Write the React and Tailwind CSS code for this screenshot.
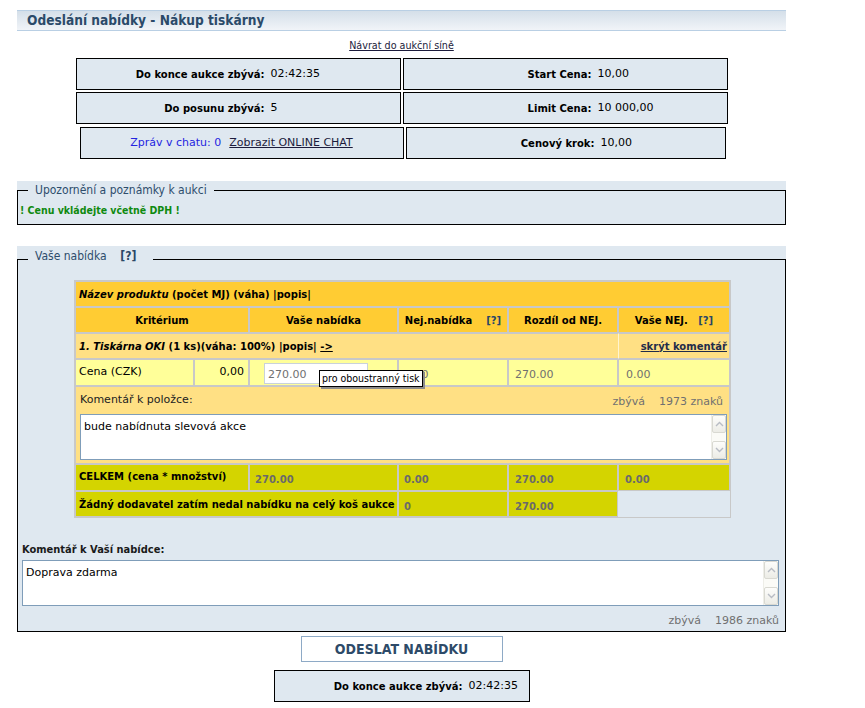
import React from "react";

/* Odeslání nabídky — formulář aukce (nákup tiskárny) */

const V = "font-['DejaVu_Sans',Verdana,sans-serif]";
const T = "font-['DejaVu_Sans_Condensed','DejaVu_Sans',Tahoma,sans-serif]";

const cell = "border border-[#c8c8c8] align-middle";

function InfoBox({ label, value, w = "w-[325px]", labelW = "w-[188px]" }) {
  return (
    <div className={`${w} h-[32px] border border-black bg-[#dfe8f0] flex items-center`}>
      <div className={`${labelW} shrink-0 text-right font-bold text-[10px] text-black`}>{label}</div>
      <div className="pl-[6px] text-[11px] text-black">{value}</div>
    </div>
  );
}

function FakeScroll() {
  return (
    <div className="flex w-[15px] flex-col justify-between bg-[#fbfbf7] border-l border-[#eeeee8]">
      <div className="flex h-[18px] items-center justify-center rounded-[2px] border border-[#d9d9d2] bg-gradient-to-b from-[#fdfdfb] to-[#ecece6]">
        <svg width="9" height="6" viewBox="0 0 9 6">
          <path d="M1 5 L4.5 1.5 L8 5" fill="none" stroke="#b8bcc4" strokeWidth="1.4" />
        </svg>
      </div>
      <div className="flex h-[18px] items-center justify-center rounded-[2px] border border-[#d9d9d2] bg-gradient-to-b from-[#fdfdfb] to-[#ecece6]">
        <svg width="9" height="6" viewBox="0 0 9 6">
          <path d="M1 1 L4.5 4.5 L8 1" fill="none" stroke="#b8bcc4" strokeWidth="1.4" />
        </svg>
      </div>
    </div>
  );
}

function FakeTextarea({ text, className }) {
  return (
    <div className={`flex border border-[#7f9db9] bg-white ${className}`}>
      <div className="flex-1 px-[3px] pt-[5px] text-[11px] leading-[14px] text-black">{text}</div>
      <FakeScroll />
    </div>
  );
}

export default function App() {
  return (
    <div className={`${V} min-h-[708px] w-[865px] bg-white text-black`}>
      <div className="ml-[17px] w-[769px] pt-[10px]">
        {/* Titulek */}
        <div className="flex h-[21px] items-center border-y border-[#b9cfe4] bg-gradient-to-b from-[#d4dfe9] to-[#f1f4f8] pl-[10px]">
          <h1 className={`${T} text-[13.6px] font-bold text-[#2b4a69]`}>Odeslání nabídky - Nákup tiskárny</h1>
        </div>

        <div className="mt-[9px] text-center text-[9.6px] leading-[12px]">
          <a className="text-[#1c1c3c] underline">Návrat do aukční síně</a>
        </div>

        {/* Info boxy */}
        <div className="mt-[6px] flex flex-col items-center">
          <div className="flex gap-[2px]">
            <InfoBox label="Do konce aukce zbývá:" value="02:42:35" />
            <InfoBox label="Start Cena:" value="10,00" />
          </div>
          <div className="mt-[2px] flex gap-[2px]">
            <InfoBox label="Do posunu zbývá:" value="5" />
            <InfoBox label="Limit Cena:" value="10 000,00" />
          </div>
          <div className="mt-[3px] flex gap-[2px] pl-[2px]">
            <div className="flex h-[32px] w-[324px] items-center justify-center border border-black bg-[#dfe8f0] text-[11px]">
              <span className="text-[#2424e0]">Zpráv v chatu: 0</span>
              <a className="ml-[8px] text-[#1c1c3c] underline">Zobrazit ONLINE CHAT</a>
            </div>
            <InfoBox w="w-[320px]" labelW="w-[188px]" label="Cenový krok:" value="10,00" />
          </div>
        </div>

        {/* Upozornění */}
        <div className="mt-[22px] bg-[#dfe8f0]">
          <fieldset className="border border-black px-[2px]">
            <legend className={`${T} ml-[8px] px-[7px] text-[12px] leading-[18px] text-[#2e4d6c]`}>
              Upozornění a poznámky k aukci
            </legend>
            <div className={`${T} pt-[4px] pb-[6px] text-[10.5px] font-bold leading-[15px] text-[#0f8a0f]`}>
              ! Cenu vkládejte včetně DPH !
            </div>
          </fieldset>
        </div>

        {/* Vaše nabídka */}
        <div className="mt-[21px] bg-[#dfe8f0] pt-[1px]">
          <fieldset className="border border-black pl-[4px] pr-[6px] pb-[3px]">
            <legend className={`${T} ml-[6px] h-[24px] pl-[7px] pr-[17px] text-[12px] leading-[18px] text-[#2e4d6c]`}>
              Vaše nabídka&nbsp;&nbsp;&nbsp;&nbsp;<span className="font-bold text-[#2a4766]">[?]</span>
            </legend>

            <div className="relative ml-[52px] mt-[9px] w-[657px]">
              <table className="w-[657px] table-fixed border-separate border-spacing-0 border border-[#c8c8c8] text-[11px]">
                <colgroup>
                  <col className="w-[119px]" />
                  <col className="w-[55px]" />
                  <col className="w-[149px]" />
                  <col className="w-[110px]" />
                  <col className="w-[110px]" />
                  <col className="w-[112px]" />
                </colgroup>
                <tbody>
                  <tr className="h-[26px] bg-[#ffcc33]">
                    <td colSpan={6} className={`${cell} pl-[3px] text-[10px] font-bold`}>
                      <i>Název produktu</i> (počet MJ) (váha) |popis|
                    </td>
                  </tr>
                  <tr className="h-[26px] bg-[#ffcc33] text-[10px] font-bold">
                    <td colSpan={2} className={`${cell} text-center`}>Kritérium</td>
                    <td className={`${cell} text-center`}>Vaše nabídka</td>
                    <td className={`${cell} text-center`}>
                      Nej.nabídka&nbsp;&nbsp;&nbsp;&nbsp;<span className="text-[#2a4766]">[?]</span>
                    </td>
                    <td className={`${cell} text-center`}>Rozdíl od NEJ.</td>
                    <td className={`${cell} text-center`}>
                      Vaše NEJ.&nbsp;&nbsp;&nbsp;<span className="text-[#2a4766]">[?]</span>
                    </td>
                  </tr>
                  <tr className="h-[26px] bg-[#ffe084] text-[10px] font-bold">
                    <td colSpan={5} className={`${cell} border-r-0 pl-[3px]`}>
                      <i>1. Tiskárna OKI</i> (1 ks)(váha: 100%) |popis| <a className="underline">-&gt;</a>
                    </td>
                    <td className="border-y border-r border-[#c8c8c8] border-l border-l-[#fff4d0] pr-[2px] text-right align-middle">
                      <a className="text-[#1f2c4a] underline">skrýt komentář</a>
                    </td>
                  </tr>
                  <tr className="h-[27px] bg-[#ffff99]">
                    <td className={`${cell} pl-[3px]`}>Cena (CZK)</td>
                    <td className={`${cell} pr-[4px] text-right`}>0,00</td>
                    <td className={`${cell} pl-[14px] pt-[2px]`}>
                      <div className="h-[21px] w-[104px] border border-[#c9d2da] bg-white pl-[3px] pt-[3px] text-[#707070]">270.00</div>
                    </td>
                    <td className={`${cell} pl-[5px] pt-[6px] text-[#707070]`}>0.00</td>
                    <td className={`${cell} pl-[6px] pt-[6px] text-[#707070]`}>270.00</td>
                    <td className={`${cell} pl-[7px] pt-[6px] text-[#707070]`}>0.00</td>
                  </tr>
                  <tr className="bg-[#ffe084]">
                    <td colSpan={6} className={`${cell} pl-[4px] pr-[2px] pt-[6px] pb-[3px]`}>
                      <div className="flex justify-between leading-[14px]">
                        <span className="text-[#222]">Komentář k položce:</span>
                        <span className="pr-[4px] pt-[2px] text-[#707070]">zbývá&nbsp;&nbsp;&nbsp;&nbsp;1973 znaků</span>
                      </div>
                      <FakeTextarea className="mt-[5px] h-[46px]" text="bude nabídnuta slevová akce" />
                    </td>
                  </tr>
                  <tr className="h-[27px] bg-[#d4d400] text-[10px] font-bold">
                    <td colSpan={2} className={`${cell} pl-[3px] pb-[2px]`}>CELKEM (cena * množství)</td>
                    <td className={`${cell} pl-[5px] pt-[4px] text-[#6a6a6a]`}>270.00</td>
                    <td className={`${cell} pl-[5px] pt-[4px] text-[#6a6a6a]`}>0.00</td>
                    <td className={`${cell} pl-[6px] pt-[4px] text-[#6a6a6a]`}>270.00</td>
                    <td className={`${cell} pl-[6px] pt-[4px] text-[#6a6a6a]`}>0.00</td>
                  </tr>
                  <tr className="h-[26px] text-[10px] font-bold">
                    <td colSpan={3} className={`${cell} bg-[#d4d400] pl-[3px] whitespace-nowrap`}>
                      Žádný dodavatel zatím nedal nabídku na celý koš aukce
                    </td>
                    <td className={`${cell} bg-[#d4d400] pl-[5px] pt-[4px] text-[#6a6a6a]`}>0</td>
                    <td className={`${cell} bg-[#d4d400] pl-[6px] pt-[4px] text-[#6a6a6a]`}>270.00</td>
                    <td></td>
                  </tr>
                </tbody>
              </table>

              {/* tooltip nad polem */}
              <div className={`${T} absolute left-[245px] top-[90px] border border-black bg-white px-[2px] text-[10.5px] leading-[15px] text-black shadow-[2px_2px_0_#8c8c8c]`}>
                pro oboustranný tisk
              </div>
            </div>

            <div className={`${T} mt-[24px] text-[11px] font-bold leading-[15px] text-[#1a1a1a]`}>Komentář k Vaší nabídce:</div>
            <FakeTextarea className="mt-[3px] h-[46px]" text="Doprava zdarma" />
            <div className="mt-[8px] text-right text-[11px] leading-[14px] text-[#707070]">zbývá&nbsp;&nbsp;&nbsp;&nbsp;1986 znaků</div>
          </fieldset>
        </div>

        {/* Odeslat */}
        <div className="mt-[4px] flex justify-center">
          <button className={`${T} h-[26px] w-[202px] border border-[#8eaac6] bg-white text-[14px] font-bold text-[#2d4a68]`}>
            ODESLAT NABÍDKU
          </button>
        </div>

        <div className="mt-[8px] flex justify-center">
          <InfoBox w="w-[256px]" labelW="w-[188px]" label="Do konce aukce zbývá:" value="02:42:35" />
        </div>
      </div>
    </div>
  );
}
